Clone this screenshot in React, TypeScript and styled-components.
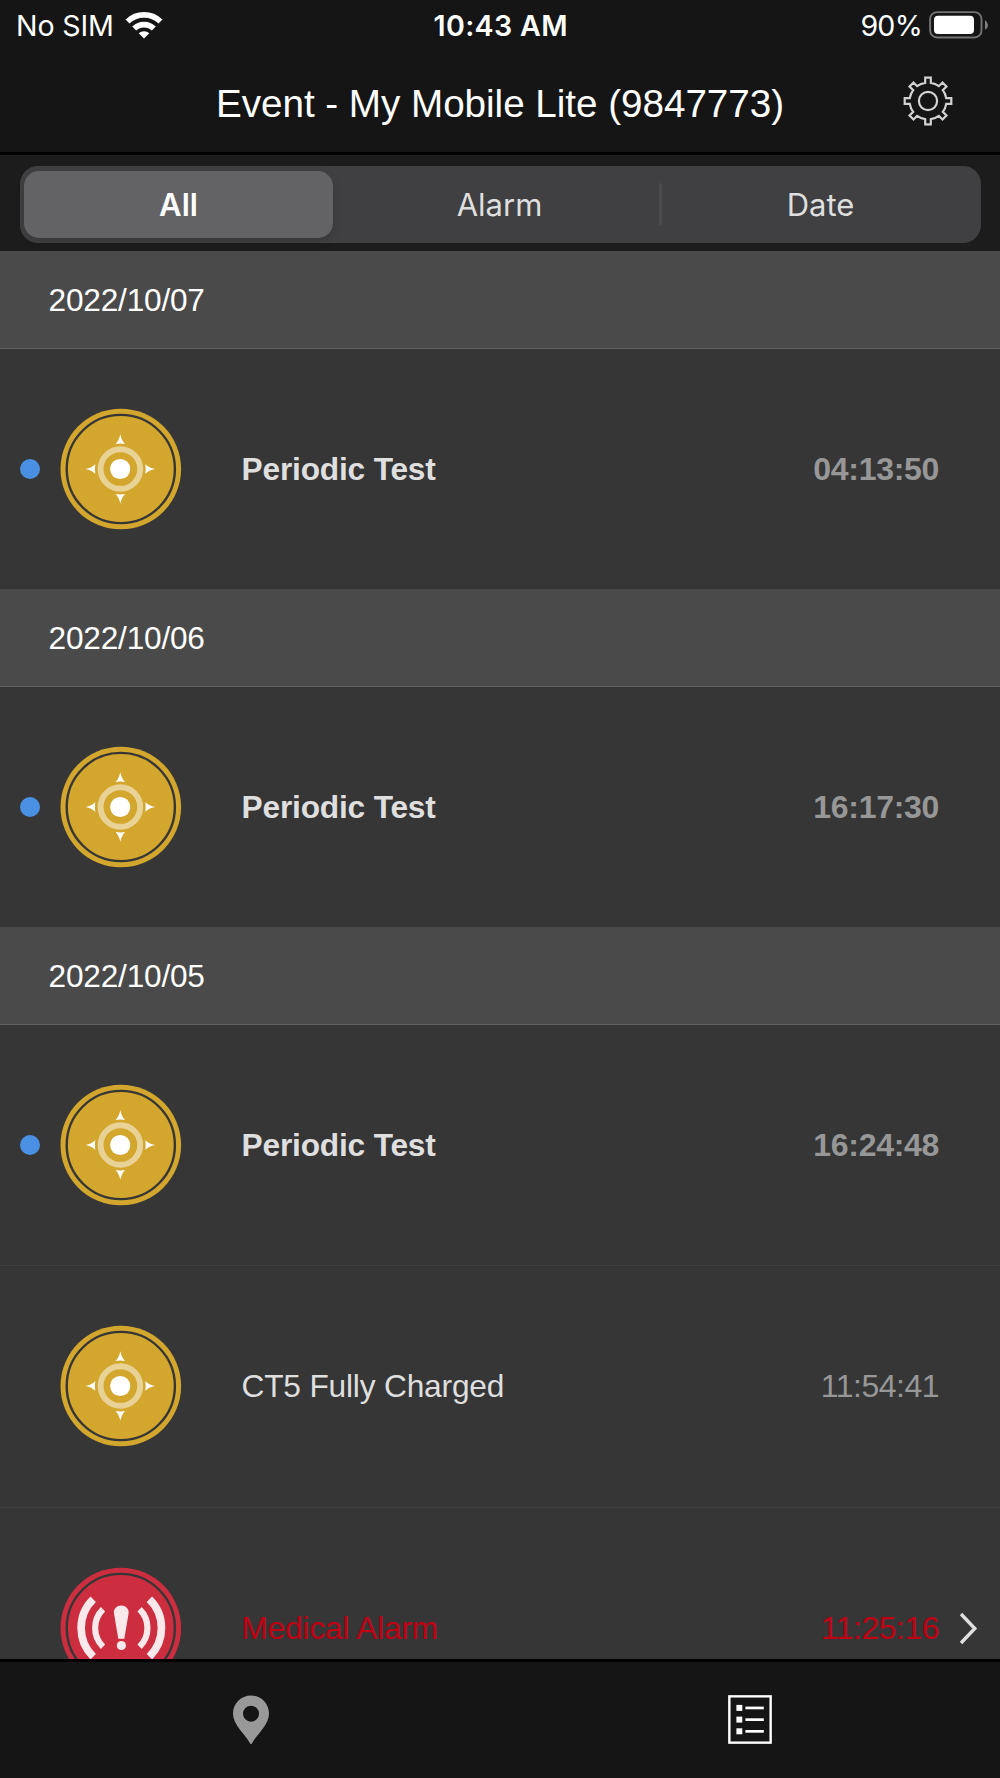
import React from "react";
import styled, { createGlobalStyle } from "styled-components";

const GlobalStyle = createGlobalStyle`
  * { box-sizing: border-box; }
  html, body { margin: 0; padding: 0; background: #151515; }
`;

const sans = `"Liberation Sans", Arial, Helvetica, sans-serif`;
const system = `Inter, "Liberation Sans", sans-serif`;

const Screen = styled.div`
  width: 1000px;
  height: 1778px;
  display: flex;
  flex-direction: column;
  overflow: hidden;
  background: #363636;
  font-family: ${sans};
  color: #fff;
`;

const Top = styled.header`
  flex: none;
  height: 155px;
  background: #151515;
  border-bottom: 3px solid #000;
`;

const StatusBar = styled.div`
  height: 50px;
  display: grid;
  grid-template-columns: 1fr auto 1fr;
  align-items: center;
  padding: 1px 11.5px 0 16px;
  font-family: ${system};
  font-size: 28.6px;
  line-height: 48px;
  white-space: nowrap;
`;

const StatusSide = styled.div<{ $end?: boolean }>`
  display: flex;
  align-items: center;
  justify-content: ${(p) => (p.$end ? "flex-end" : "flex-start")};
  gap: ${(p) => (p.$end ? "6.5px" : "11px")};
  svg { display: block; margin-bottom: 2px; }
`;

const Carrier = styled.span`
  letter-spacing: -0.15px;
`;

const Percent = styled.span`
  letter-spacing: -0.75px;
`;

const Clock = styled.span`
  font-weight: 600;
  letter-spacing: 0.35px;
  margin-right: 3px;
`;

const TitleBar = styled.div`
  height: 102px;
  display: grid;
  grid-template-columns: 100px 1fr 100px;
  align-items: center;
  justify-items: center;
`;

const Title = styled.h1`
  margin: 5px 0 0;
  font-size: 38.67px;
  line-height: 46px;
  font-weight: 400;
  letter-spacing: -0.04px;
  white-space: nowrap;
`;

const SettingsButton = styled.button`
  border: 0;
  padding: 0;
  margin: 0 45px 0 0;
  background: none;
  display: flex;
`;

const FilterArea = styled.div`
  flex: none;
  height: 95.67px;
  padding: 11px 19px 0 20px;
  background: #1c1c1c;
`;

const Segments = styled.div`
  height: 77px;
  padding: 5px 4px;
  display: grid;
  grid-template-columns: 309px 326px 3px 1fr;
  align-items: center;
  border-radius: 18px;
  background: #404042;
`;

const Segment = styled.button<{ $active?: boolean; $nudge?: number }>`
  height: 67px;
  border: 0;
  padding: 0 0 0 ${(p) => p.$nudge ?? 0}px;
  border-radius: 15px;
  background: ${(p) => (p.$active ? "#636365" : "transparent")};
  box-shadow: ${(p) => (p.$active ? "0 4px 10px rgba(0,0,0,.12)" : "none")};
  color: ${(p) => (p.$active ? "#fff" : "#dfdfdf")};
  font-family: ${system};
  font-size: 31px;
  font-weight: ${(p) => (p.$active ? 600 : 400)};
  letter-spacing: 0;
`;

const Divider = styled.i`
  height: 43px;
  border-radius: 2px;
  background: #4b4b4d;
`;

const List = styled.main`
  flex: 1;
  min-height: 0;
  overflow: hidden;
`;

const DateHeader = styled.h2`
  margin: 0;
  height: 98.2px;
  display: flex;
  align-items: center;
  padding: 2px 0 0 48.6px;
  background: #4a4a4a;
  border-bottom: 1px solid #606060;
  font-size: 31.6px;
  font-weight: 400;
  letter-spacing: -0.2px;
`;

const Row = styled.div<{ $first: boolean }>`
  height: ${(p) => (p.$first ? "240px" : "241.33px")};
  border-top: ${(p) => (p.$first ? "0" : "1px solid #414141")};
  padding-left: 20px;
  display: grid;
  grid-template-columns: 20px 20px 122px 59.5px 1fr auto 61px;
  align-items: center;
`;

const Dot = styled.i<{ $shown: boolean }>`
  width: 20px;
  height: 20px;
  border-radius: 50%;
  background: ${(p) => (p.$shown ? "#4a90e2" : "transparent")};
`;

const IconCell = styled.div`
  grid-column: 3;
  display: flex;
`;

const Label = styled.span<{ $bold?: boolean; $alarm?: boolean }>`
  grid-column: 5;
  padding-top: 1px;
  font-size: 31.7px;
  font-weight: ${(p) => (p.$bold ? 700 : 400)};
  letter-spacing: -0.19px;
  color: ${(p) => (p.$alarm ? "#c00014" : "#dfdfdf")};
`;

const Time = styled(Label)`
  grid-column: 6;
  font-size: 32px;
  letter-spacing: ${(p) => (p.$bold ? "-0.3px" : "-0.5px")};
  color: ${(p) => (p.$alarm ? "#c00014" : "#979797")};
`;

const ChevronCell = styled.div`
  grid-column: 7;
  padding-left: 19px;
  display: flex;
`;

const TabBar = styled.nav`
  flex: none;
  height: 119px;
  border-top: 3px solid #000;
  background: #151515;
  display: grid;
  grid-template-columns: 501px 497px;
  justify-items: center;
  padding-top: 33px;
`;

const Tab = styled.button`
  border: 0;
  padding: 0;
  background: none;
  display: flex;
  align-items: flex-start;
`;

const Wifi = () => (
  <svg width="38" height="28" viewBox="-19 -27.5 38 28" fill="none" stroke="#fff">
    <path d="M-16.5 -16.9A23.7 23.7 0 0 1 16.5 -16.9" strokeWidth="5.6" />
    <path d="M-9.8 -10A14.1 14.1 0 0 1 9.8 -10" strokeWidth="5.7" />
    <path d="M0 0L-5.3 -5.2A7.6 7.6 0 0 1 5.3 -5.2Z" fill="#fff" stroke="none" />
  </svg>
);

const Battery = () => (
  <svg width="60" height="28" viewBox="0 0 60 28">
    <rect x="1.1" y="1.1" width="51.4" height="25.4" rx="7" fill="none" stroke="#737373" strokeWidth="1.9" />
    <rect x="5" y="4.8" width="40" height="18.2" rx="4" fill="#fff" />
    <path d="M56 9.2Q59 11 59 14T56 18.8Z" fill="#808080" />
  </svg>
);

const gearPath = (() => {
  const body = 18.4;
  const tip = 23.3;
  const half = 2.8;
  const base = Math.sqrt(body * body - half * half);
  const points: string[] = [];
  for (let i = 0; i < 8; i++) {
    const a = (i * Math.PI) / 4;
    const at = (x: number, y: number) =>
      `${(x * Math.cos(a) - y * Math.sin(a)).toFixed(2)} ${(x * Math.sin(a) + y * Math.cos(a)).toFixed(2)}`;
    points.push(
      `${i ? `A${body} ${body} 0 0 1 ` : "M"}${at(-half, -base)}L${at(-half, -tip)}L${at(half, -tip)}L${at(half, -base)}`
    );
  }
  return `${points.join("")}A${body} ${body} 0 0 1 ${-half} ${-base}Z`;
})();

const Gear = () => (
  <svg width="50" height="50" viewBox="-25 -25 50 50" fill="none" stroke="#d2d2d2" strokeWidth="2.2">
    <path d={gearPath} />
    <circle r="9.1" />
  </svg>
);

const Badge = ({ color, children }: { color: string; children: React.ReactNode }) => (
  <svg width="122" height="122" viewBox="-60.8 -61 122 122">
    <circle r="60.3" fill={color} />
    <circle r="54.1" fill="none" stroke="#363636" strokeWidth="2.4" />
    {children}
  </svg>
);

const TestIcon = () => (
  <Badge color="#d3a62d">
    <circle cx="-.4" r="19.8" fill="none" stroke="#e9d296" strokeWidth="5.9" />
    <circle cx="-.6" r="10.1" fill="#fff" />
    {[0, 90, 180, 270].map((a) => (
      <path key={a} transform={`translate(-.5 0) rotate(${a})`} d="M0 -34.8Q1.3 -28.5 4.7 -25Q0 -25.8 -4.7 -25Q-1.3 -28.5 0 -34.8Z" fill="#fff" />
    ))}
  </Badge>
);

const AlarmIcon = () => (
  <Badge color="#cc2e40">
    <g transform="translate(.5 0)" fill="none" stroke="#fae8eb">
      <path d="M-28.1 -28.7A40.2 40.2 0 0 0 -28.1 28.7M28.1 -28.7A40.2 40.2 0 0 1 28.1 28.7" strokeWidth="7.7" />
      <path d="M-18.3 -18.7A26.2 26.2 0 0 0 -18.3 18.7M18.3 -18.7A26.2 26.2 0 0 1 18.3 18.7" strokeWidth="6.2" />
      <path d="M-3 10.8L-7.2 -14C-8.3 -19.5 -4 -22.5 0 -22.5S8.3 -19.5 7.2 -14L3 10.8Z" fill="#fae8eb" stroke="none" />
      <circle cx=".1" cy="17.5" r="4.6" fill="#fae8eb" stroke="none" />
    </g>
  </Badge>
);

const Chevron = () => (
  <svg width="22" height="34" viewBox="0 0 22 34" fill="none" stroke="#dfdfdf" strokeWidth="3.4">
    <path d="M3 3L16.8 17.5L3 32" />
  </svg>
);

const Pin = () => (
  <svg width="38" height="50" viewBox="0 0 38 50">
    <path
      fill="#999"
      fillRule="evenodd"
      d="M19 .5C9 .5 1 8.5 1 18.5C1 30 13 39 18 48.3Q19 50 20 48.3C25 39 37 30 37 18.5C37 8.5 29 .5 19 .5ZM19 10.7A8 8 0 1 1 19 26.7A8 8 0 1 1 19 10.7Z"
    />
  </svg>
);

const ListIcon = () => (
  <svg width="44" height="49" viewBox="0 0 44 49" fill="#fff">
    <rect x="1.35" y="1.35" width="41.3" height="46.3" fill="none" stroke="#fff" strokeWidth="2.4" />
    {[13, 24.7, 36.4].map((y) => (
      <g key={y}>
        <rect x="8.4" y={y - 3.1} width="5.9" height="6" />
        <rect x="17.4" y={y - 1.4} width="18.4" height="2.7" />
      </g>
    ))}
  </svg>
);

type Event = { label: string; time: string; unread?: boolean; alarm?: boolean };

const days: { date: string; events: Event[] }[] = [
  { date: "2022/10/07", events: [{ label: "Periodic Test", time: "04:13:50", unread: true }] },
  { date: "2022/10/06", events: [{ label: "Periodic Test", time: "16:17:30", unread: true }] },
  {
    date: "2022/10/05",
    events: [
      { label: "Periodic Test", time: "16:24:48", unread: true },
      { label: "CT5 Fully Charged", time: "11:54:41" },
      { label: "Medical Alarm", time: "11:25:16", alarm: true },
    ],
  },
];

export default function App() {
  return (
    <Screen>
      <GlobalStyle />
      <Top>
        <StatusBar>
          <StatusSide>
            <Carrier>No SIM</Carrier>
            <Wifi />
          </StatusSide>
          <Clock>10:43 AM</Clock>
          <StatusSide $end>
            <Percent>90%</Percent>
            <Battery />
          </StatusSide>
        </StatusBar>
        <TitleBar>
          <span />
          <Title>Event - My Mobile Lite (9847773)</Title>
          <SettingsButton aria-label="Settings">
            <Gear />
          </SettingsButton>
        </TitleBar>
      </Top>
      <FilterArea>
        <Segments>
          <Segment $active>All</Segment>
          <Segment $nudge={7}>Alarm</Segment>
          <Divider />
          <Segment $nudge={2}>Date</Segment>
        </Segments>
      </FilterArea>
      <List>
        {days.map((day) => (
          <section key={day.date}>
            <DateHeader>{day.date}</DateHeader>
            {day.events.map((e, i) => (
              <Row key={e.time} $first={i === 0}>
                <Dot $shown={!!e.unread} />
                <IconCell>{e.alarm ? <AlarmIcon /> : <TestIcon />}</IconCell>
                <Label $bold={e.unread} $alarm={e.alarm}>{e.label}</Label>
                <Time $bold={e.unread} $alarm={e.alarm}>{e.time}</Time>
                <ChevronCell>{e.alarm && <Chevron />}</ChevronCell>
              </Row>
            ))}
          </section>
        ))}
      </List>
      <TabBar>
        <Tab aria-label="Map"><Pin /></Tab>
        <Tab aria-label="Events"><ListIcon /></Tab>
      </TabBar>
    </Screen>
  );
}
